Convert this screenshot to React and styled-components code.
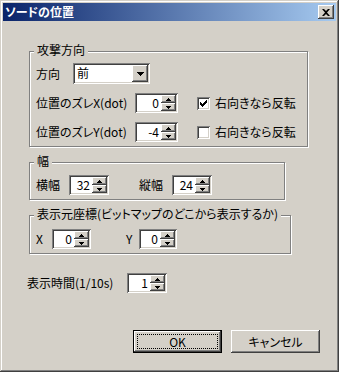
import React from 'react';
import styled, { createGlobalStyle } from 'styled-components';

const GlobalStyle = createGlobalStyle`
  html, body {
    margin: 0;
    padding: 0;
    background: #d4d0c8;
  }
  body {
    font-family: "Noto Sans CJK JP", "Noto Sans", sans-serif;
    font-size: 12px;
    color: #000;
    font-feature-settings: "palt";
  }
`;

const Window = styled.div`
  width: 339px;
  height: 372px;
  box-sizing: border-box;
  padding: 3px;
  background: #d4d0c8;
  box-shadow: inset -1px -1px #404040, inset 1px 1px #d4d0c8,
    inset -2px -2px #808080, inset 2px 2px #fff;
  display: flex;
  flex-direction: column;
`;

const TitleBar = styled.div`
  height: 18px;
  flex: none;
  display: flex;
  align-items: center;
  justify-content: space-between;
  padding: 0 2px;
  background: linear-gradient(to right, #0a246a, #a6caf0);
  color: #fff;
  font-weight: bold;
  font-size: 12px;
  line-height: 18px;
`;

const CloseBtn = styled.div`
  width: 16px;
  height: 14px;
  box-sizing: border-box;
  background: #d4d0c8;
  box-shadow: inset -1px -1px #404040, inset 1px 1px #fff, inset -2px -2px #808080;
  display: flex;
  align-items: center;
  justify-content: center;
`;

const Body = styled.div`
  flex: 1;
  display: flex;
  flex-direction: column;
  padding: 30px 0 0 26px;
`;

const Group = styled.div`
  position: relative;
  box-sizing: border-box;
  width: ${(p) => p.$w}px;
  height: ${(p) => p.$h}px;
  margin-top: ${(p) => p.$top || 0}px;
  border: 1px solid #808080;
  box-shadow: inset 1px 1px #fff, 1px 1px #fff;
  padding: ${(p) => p.$pt}px 0 0 6px;
`;

const Legend = styled.span`
  position: absolute;
  top: -9px;
  left: 4px;
  padding: 0 3px;
  background: #d4d0c8;
  line-height: 14px;
  white-space: nowrap;
`;

const Row = styled.div`
  display: flex;
  align-items: center;
  height: ${(p) => p.$h || 20}px;
  margin-top: ${(p) => p.$top || 0}px;
  margin-left: ${(p) => p.$left || 0}px;
`;

const Label = styled.span`
  flex: none;
  width: ${(p) => p.$w}px;
  margin-left: ${(p) => p.$ml || 0}px;
  white-space: nowrap;
  line-height: 14px;
`;

const Sunken = styled.div`
  flex: none;
  display: flex;
  box-sizing: border-box;
  width: ${(p) => p.$w}px;
  height: ${(p) => p.$h || 20}px;
  padding: 2px;
  background: #fff;
  box-shadow: inset 1px 1px #808080, inset -1px -1px #fff,
    inset 2px 2px #404040, inset -2px -2px #d4d0c8;
`;

const Value = styled.span`
  flex: 1;
  text-align: ${(p) => (p.$left ? 'left' : 'right')};
  padding: 0 2px;
  line-height: 16px;
`;

const Arrows = styled.div`
  width: 15px;
  display: flex;
  flex-direction: column;
`;

const ArrowBtn = styled.div`
  flex: 1;
  display: flex;
  align-items: center;
  justify-content: center;
  background: #d4d0c8;
  box-shadow: inset -1px -1px #404040, inset 1px 1px #fff, inset -2px -2px #808080;
`;

const DropBtn = styled(ArrowBtn)`
  flex: none;
  width: 16px;
`;

const Box = styled.span`
  flex: none;
  width: 13px;
  height: 13px;
  box-sizing: border-box;
  margin-left: ${(p) => p.$ml || 0}px;
  margin-right: 5px;
  background: #fff;
  box-shadow: inset 1px 1px #808080, inset -1px -1px #fff,
    inset 2px 2px #404040, inset -2px -2px #d4d0c8;
  display: flex;
  align-items: center;
  justify-content: center;
`;

const Buttons = styled.div`
  margin-top: auto;
  display: flex;
  justify-content: flex-end;
  gap: 9px;
  padding: 0 16px 16px 0;
`;

const Button = styled.div`
  width: 89px;
  height: 23px;
  box-sizing: border-box;
  display: flex;
  align-items: center;
  justify-content: center;
  background: #d4d0c8;
  position: relative;
  box-shadow: ${(p) =>
    p.$default
      ? 'inset 0 0 0 1px #000, inset -2px -2px #404040, inset 2px 2px #fff, inset -3px -3px #808080'
      : 'inset -1px -1px #404040, inset 1px 1px #fff, inset -2px -2px #808080'};
  &::after {
    content: '';
    display: ${(p) => (p.$default ? 'block' : 'none')};
    position: absolute;
    inset: 4px;
    border: 1px dotted #000;
  }
`;

const Up = () => (
  <svg width="5" height="3" viewBox="0 0 5 3">
    <path d="M2 0h1v1h1v1h1v1H0V2h1V1h1z" fill="#000" />
  </svg>
);

const Down = () => (
  <svg width="5" height="3" viewBox="0 0 5 3">
    <path d="M0 0h5v1H4v1H3v1H2V2H1V1H0z" fill="#000" />
  </svg>
);

const Spin = ({ value, w = 40, h = 20 }) => (
  <Sunken $w={w} $h={h}>
    <Value>{value}</Value>
    <Arrows>
      <ArrowBtn><Up /></ArrowBtn>
      <ArrowBtn><Down /></ArrowBtn>
    </Arrows>
  </Sunken>
);

const Check = ({ checked, ml, children }) => (
  <>
    <Box $ml={ml}>
      {checked && (
        <svg width="7" height="7" viewBox="0 0 7 7">
          <path d="M0 2h1v1h1v1h1V3h1V2h1V1h1V0h1v3H6v1H5v1H4v1H3v1H2V6H1V5H0z" fill="#000" />
        </svg>
      )}
    </Box>
    <Label $w={90}>{children}</Label>
  </>
);

export default function App() {
  return (
    <>
      <GlobalStyle />
      <Window>
        <TitleBar>
          <span>ソードの位置</span>
          <CloseBtn>
            <svg width="8" height="7" viewBox="0 0 8 7">
              <path d="M0 0h2l2 2 2-2h2L5 3.5 8 7H6L4 5 2 7H0l3-3.5z" fill="#000" />
            </svg>
          </CloseBtn>
        </TitleBar>
        <Body>
          <Group $w={279} $h={96} $pt={11}>
            <Legend>攻撃方向</Legend>
            <Row $h={21}>
              <Label $w={37}>方向</Label>
              <Sunken $w={77} $h={21}>
                <Value $left>前</Value>
                <DropBtn>
                  <svg width="7" height="4" viewBox="0 0 7 4">
                    <path d="M0 0h7v1H6v1H5v1H4v1H3V3H2V2H1V1H0z" fill="#000" />
                  </svg>
                </DropBtn>
              </Sunken>
            </Row>
            <Row $top={9}>
              <Label $w={99}>位置のズレX(dot)</Label>
              <Spin value="0" w={43} />
              <Check checked ml={19}>右向きなら反転</Check>
            </Row>
            <Row $top={9}>
              <Label $w={99}>位置のズレY(dot)</Label>
              <Spin value="-4" w={43} />
              <Check ml={19}>右向きなら反転</Check>
            </Row>
          </Group>

          <Group $w={256} $h={38} $top={15} $pt={12}>
            <Legend>幅</Legend>
            <Row>
              <Label $w={33}>横幅</Label>
              <Spin value="32" />
              <Label $w={33} $ml={30}>縦幅</Label>
              <Spin value="24" />
            </Row>
          </Group>

          <Group $w={262} $h={39} $top={15} $pt={13}>
            <Legend>表示元座標(ビットマップのどこから表示するか)</Legend>
            <Row>
              <Label $w={16}>X</Label>
              <Spin value="0" w={39} />
              <Label $w={13} $ml={35}>Y</Label>
              <Spin value="0" w={38} />
            </Row>
          </Group>

          <Row $top={19} $left={-2}>
            <Label $w={100}>表示時間(1/10s)</Label>
            <Spin value="1" />
          </Row>

          <Buttons>
            <Button $default>OK</Button>
            <Button>キャンセル</Button>
          </Buttons>
        </Body>
      </Window>
    </>
  );
}
